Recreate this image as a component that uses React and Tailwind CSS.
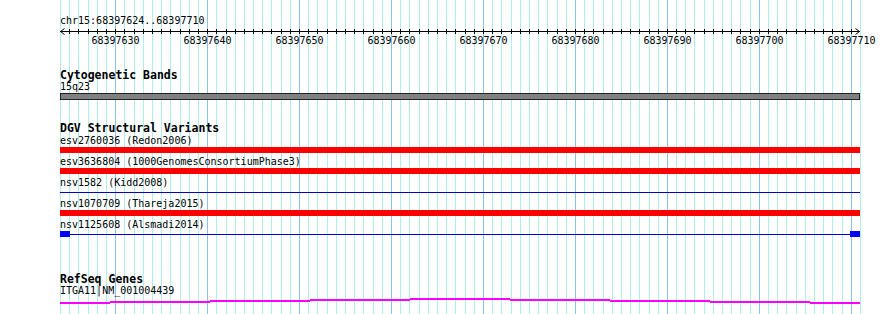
import React from 'react';

const START = 68397624;
const BASES = 87;
const WIDTH = 800;
const LEFT = 60;
const bp = WIDTH / BASES;

const gridX = Array.from({ length: BASES + 1 }, (_, i) => Math.round(LEFT + i * bp));
const majors = gridX
  .map((x, i) => ({ x, pos: START + i }))
  .filter((g) => g.pos % 10 === 0);

const variants = [
  { label: 'esv2760036 (Redon2006)', kind: 'red' },
  { label: 'esv3636804 (1000GenomesConsortiumPhase3)', kind: 'red' },
  { label: 'nsv1582 (Kidd2008)', kind: 'line' },
  { label: 'nsv1070709 (Thareja2015)', kind: 'red' },
  { label: 'nsv1125608 (Alsmadi2014)', kind: 'line', ends: true },
];

// gene line drawn as stepped segments, like the reference render
const geneSegs = [
  [60, 110, 5], [110, 210, 4], [210, 310, 3], [310, 410, 2], [410, 510, 1],
  [510, 610, 2], [610, 710, 3], [710, 810, 4], [810, 860, 5],
];

const Grid = () => (
  <svg className="absolute inset-0" width="890" height="314" shapeRendering="crispEdges">
    {gridX.map((x, i) => (
      <rect
        key={i}
        x={x}
        y={0}
        width={1}
        height={314}
        fill={(START + i) % 10 === 0 ? '#8cc2e6' : '#b0eeee'}
      />
    ))}
  </svg>
);

const Ruler = () => (
  <div className="relative h-[20px] w-[800px]">
    <svg className="absolute -left-[1px] top-0 overflow-visible" width="802" height="10" shapeRendering="crispEdges">
      <rect x={1} y={4} width={800} height={1} fill="#000" />
      {gridX.slice(1, -1).map((x, i) => (
        <rect key={i} x={x - LEFT + 1} y={2} width={1} height={5} fill="#000" />
      ))}
      <g stroke="#000" strokeWidth="1" fill="none" shapeRendering="auto">
        <path d="M5.5 1.5 L1.5 4.5 L5.5 7.5" />
        <path d="M796.5 1.5 L800.5 4.5 L796.5 7.5" />
      </g>
    </svg>
    {majors.map((m) => (
      <span
        key={m.pos}
        className="absolute top-[8px] -translate-x-1/2 text-[10px] leading-[12px] whitespace-nowrap"
        style={{ left: m.x - LEFT + 0.5 }}
      >
        {m.pos}
      </span>
    ))}
  </div>
);

const TrackTitle = ({ children, className = '' }) => (
  <div className={`text-[11.5px] font-bold leading-[12px] ${className}`}>{children}</div>
);

const Label = ({ children }) => (
  <div className="text-[10px] leading-[12px] whitespace-nowrap">{children}</div>
);

const VariantRow = ({ label, kind, ends }) => (
  <div className="mb-[3px]">
    <Label>{label}</Label>
    {kind === 'red' ? (
      <div className="h-[6px] w-[800px] bg-[#ff0000]" />
    ) : (
      <div className="flex h-[6px] w-[800px] items-center">
        {ends && <div className="h-[6px] w-[10px] shrink-0 bg-[#0000ff]" />}
        <div className="h-[1px] flex-1 bg-[#0000c8]" />
        {ends && <div className="h-[6px] w-[10px] shrink-0 bg-[#0000ff]" />}
      </div>
    )}
  </div>
);

export default function App() {
  return (
    <div className="relative h-[314px] w-[890px] overflow-hidden bg-white font-['DejaVu_Sans_Mono',monospace] text-black">
      <Grid />
      <div className="relative pl-[60px] pt-[15px]">
        <Label>chr15:68397624..68397710</Label>
        <Ruler />

        <TrackTitle className="mt-[22px]">Cytogenetic Bands</TrackTitle>
        <Label>15q23</Label>
        <div className="h-[7px] w-[800px] border border-[#222] bg-[#808080]" />

        <TrackTitle className="mt-[22px]">DGV Structural Variants</TrackTitle>
        <div className="mt-[1px]">
          {variants.map((v) => (
            <VariantRow key={v.label} {...v} />
          ))}
        </div>

        <TrackTitle className="mt-[36px]">RefSeq Genes</TrackTitle>
        <Label>ITGA11|NM_001004439</Label>
        <svg width="800" height="8" shapeRendering="crispEdges" className="block">
          {geneSegs.map(([a, b, y]) => (
            <rect key={a} x={a - LEFT} y={y} width={b - a} height={1.5} fill="#ff00ff" />
          ))}
        </svg>
      </div>
    </div>
  );
}
